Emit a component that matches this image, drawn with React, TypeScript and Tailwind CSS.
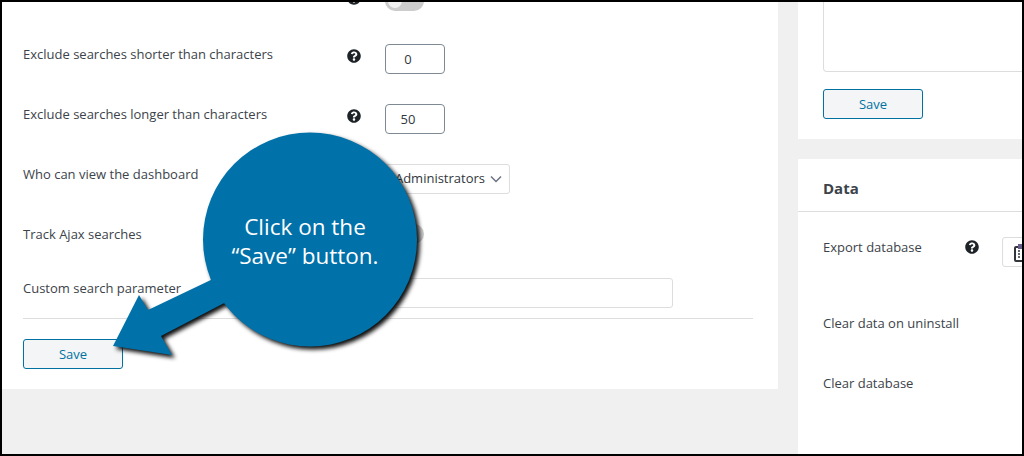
import React from 'react';
import { FaQuestionCircle } from 'react-icons/fa';

const Help = () => <FaQuestionCircle size={14} className="text-[#1d2327]" />;

const Label = ({ children }: { children?: React.ReactNode }) => (
  <div className="w-[324px] shrink-0 text-[13px] leading-5 text-[#3c434a]">
    <span>{children}</span>
  </div>
);

const SaveButton = () => (
  <button className="w-[100px] h-[30px] pt-px bg-[#f3f5f6] border border-[#0071a1] rounded-[3px] text-[13px] text-[#0071a1]">
    Save
  </button>
);

const Toggle = () => (
  <div className="flex items-center w-[39px] h-5 pl-[3px] rounded-full bg-[#cccccc]">
    <div className="w-[14px] h-[14px] rounded-full bg-[#f1f1f1]" />
  </div>
);

const NumberBox = ({ value }: { value: string }) => (
  <div className="w-[60px] h-[30px] border border-[#7e8993] rounded-[4px] bg-white pr-[14px] text-center text-[13px] leading-[28px] text-[#32373c]">
    {value}
  </div>
);

const Row = ({ label, help = true, children }: { label: string; help?: boolean; children?: React.ReactNode }) => (
  <div className="flex h-[60px]">
    <Label>{label}</Label>
    <div className="w-[38px] shrink-0 pt-[5px]">{help && <Help />}</div>
    <div>{children}</div>
  </div>
);

export default function App() {
  return (
    <div className="relative flex h-[456px] overflow-hidden border-2 border-black bg-[#f0f0f0] font-['Open_Sans','Liberation_Sans',sans-serif]">
      {/* Main settings card */}
      <div className="w-[776px] h-[387px] shrink-0 overflow-hidden bg-white px-[21px]">
        <div className="-mt-[18px] flex h-[60px]">
          <Label />
          <div className="w-[38px] shrink-0 pt-[7px]">
            <Help />
          </div>
          <div className="pt-[7px]">
            <Toggle />
          </div>
        </div>
        <Row label="Exclude searches shorter than characters">
          <NumberBox value="0" />
        </Row>
        <Row label="Exclude searches longer than characters">
          <NumberBox value="50" />
        </Row>
        <Row label="Who can view the dashboard" help={false}>
          <div className="flex items-center justify-end gap-[5px] w-[125px] h-[30px] pr-[7px] border border-[#dddddd] rounded-[3px] bg-white text-[13px] text-[#32373c]">
            Administrators
            <svg width="12" height="12" viewBox="0 0 12 12" fill="none" stroke="#6b7280" strokeWidth="1.5">
              <path d="M1 3.5 L6 8.5 L11 3.5" />
            </svg>
          </div>
        </Row>
        <Row label="Track Ajax searches" help={false}>
          <Toggle />
        </Row>
        <div className="flex h-[40px] -mt-[6px]">
          <Label>Custom search parameter</Label>
          <div className="w-[38px] shrink-0" />
          <div className="w-[288px] h-[30px] border border-[#dddddd] rounded-[3px] bg-white" />
        </div>
        <div className="w-[730px] border-t border-[#dddddd] mb-5" />
        <SaveButton />
      </div>

      {/* Right column */}
      <div className="ml-5 flex-1 min-w-0 flex flex-col gap-5 overflow-hidden">
        <div className="h-[137px] shrink-0 bg-white pl-[25px]">
          <div className="h-[70px] -mr-4 border border-t-0 border-[#dddddd] rounded-bl-[4px]" />
          <div className="mt-[17px]">
            <SaveButton />
          </div>
        </div>
        <div className="flex-1 bg-white">
          <div className="h-[53px] border-b border-[#dddddd] pl-[25px] pt-[19px] text-[15px] leading-5 font-bold text-[#3c434a]">
            Data
          </div>
          <div className="pl-[25px] pt-[25px]">
            <div className="flex h-[76px]">
              <div className="w-[142px] shrink-0 text-[13px] leading-5 text-[#3c434a]">Export database</div>
              <div className="w-[37px] shrink-0 pt-[3px]">
                <Help />
              </div>
              <div className="w-[40px] h-[30px] shrink-0 border border-[#dddddd] rounded-[3px] pl-[11px] pt-[6px]">
                <svg width="14" height="18" viewBox="0 0 14 18" fill="none">
                  <rect x="1" y="3" width="12" height="14" rx="1" stroke="#32373c" strokeWidth="2" />
                  <rect x="4" y="0" width="6" height="5" fill="#6b5b8a" />
                  <path d="M4 7h2M4 10h2M4 13h2M8 7h2M8 10h2M8 13h2" stroke="#32373c" strokeWidth="1.6" />
                </svg>
              </div>
            </div>
            <div className="h-[60px] text-[13px] leading-5 text-[#3c434a]">Clear data on uninstall</div>
            <div className="text-[13px] leading-5 text-[#3c434a]">Clear database</div>
          </div>
        </div>
      </div>

      {/* Callout */}
      <svg
        width="340"
        height="270"
        viewBox="0 0 340 270"
        className="absolute left-[98px] top-[118px] drop-shadow-[3px_3px_2px_rgba(0,0,0,0.95)]"
      >
        <g fill="#0071a9" transform="translate(-100 -120)">
          <circle cx="310" cy="239.5" r="107" />
          <path d="M215 278 L148 310 L139 295 L113 346 L172 355 L161 336 L230 300 Z" />
        </g>
      </svg>
      <div className="absolute left-[203px] top-[210px] w-[200px] text-center text-[22.5px] leading-[29px] text-white">
        Click on the
        <br />
        “Save” button.
      </div>
    </div>
  );
}
